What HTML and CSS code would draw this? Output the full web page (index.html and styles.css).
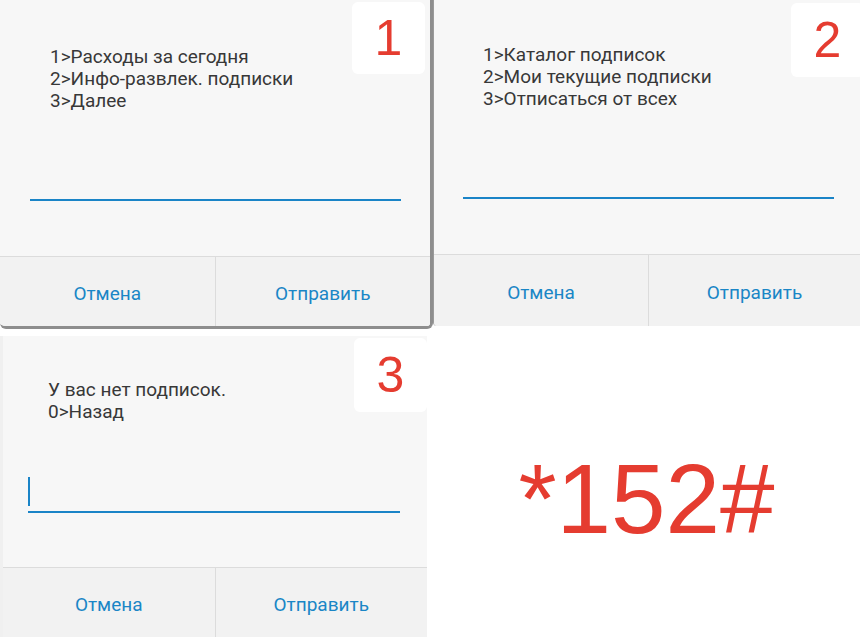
FILE: index.html
```html
<!DOCTYPE html>
<html lang="ru">

<head>
    <meta charset="UTF-8">
    <meta name="viewport" content="width=device-width, initial-scale=1.0">
    <title>USSD *152#</title>
    <link rel="stylesheet" href="styles.css">
</head>

<body>
    <div class="screen">
        <div class="row">
            <section class="dialog dialog-first">
                <div class="dialog-body">
                    <span class="badge">1</span>
                    <div class="message">
                        <p>1&gt;Расходы за сегодня</p>
                        <p>2&gt;Инфо-развлек. подписки</p>
                        <p>3&gt;Далее</p>
                    </div>
                    <div class="field"></div>
                </div>
                <div class="dialog-actions">
                    <button class="btn">Отмена</button>
                    <button class="btn">Отправить</button>
                </div>
            </section>

            <section class="dialog dialog-second">
                <div class="dialog-body">
                    <span class="badge">2</span>
                    <div class="message">
                        <p>1&gt;Каталог подписок</p>
                        <p>2&gt;Мои текущие подписки</p>
                        <p>3&gt;Отписаться от всех</p>
                    </div>
                    <div class="field"></div>
                </div>
                <div class="dialog-actions">
                    <button class="btn">Отмена</button>
                    <button class="btn">Отправить</button>
                </div>
            </section>
        </div>

        <div class="row row-bottom">
            <section class="dialog dialog-third">
                <div class="dialog-body">
                    <span class="badge">3</span>
                    <div class="message">
                        <p>У вас нет подписок.</p>
                        <p>0&gt;Назад</p>
                    </div>
                    <div class="field field-active"></div>
                </div>
                <div class="dialog-actions">
                    <button class="btn">Отмена</button>
                    <button class="btn">Отправить</button>
                </div>
            </section>

            <div class="code">*152#</div>
        </div>
    </div>
</body>

</html>
```

FILE: styles.css
```css
body {
    margin: 0;
    background-color: #fff;
    font-family: Roboto, "Noto Sans", sans-serif;
    overflow: hidden;
}

.screen {
    width: 860px;
    height: 637px;
}

.row {
    display: flex;
    align-items: flex-start;
}

.row-bottom {
    margin-top: 7px;
}

/* dialog frame */
.dialog {
    position: relative;
    box-sizing: border-box;
    display: flex;
    flex-direction: column;
    background-color: #f7f7f7;
    overflow: hidden;
}

.dialog-first {
    width: 433px;
    height: 329px;
    border-right: 3px solid #8e8e8e;
    border-bottom: 3px solid #8e8e8e;
    border-radius: 0 0 6px 6px;
}

.dialog-second {
    width: 427px;
    height: 326px;
    border-left: 1px solid #9a9a9a;
    border-radius: 0 0 0 4px;
}

.dialog-third {
    width: 427px;
    height: 301px;
    border-left: 3px solid #f0f0f0;
}

.dialog-body {
    position: relative;
    height: 256px;
    border-bottom: 1px solid #dcdcdc;
    box-sizing: border-box;
}

.dialog-first .dialog-body {
    height: 257px;
    padding: 46px 0 0 50px;
}

.dialog-second .dialog-body {
    height: 255px;
    padding: 44px 0 0 49px;
}

.dialog-third .dialog-body {
    height: 232px;
    padding: 43px 0 0 45px;
}

.badge {
    position: absolute;
    top: 2px;
    right: 5px;
    width: 73px;
    height: 72px;
    display: flex;
    justify-content: center;
    align-items: center;
    background-color: #fff;
    border-radius: 6px;
    color: #e53c30;
    font-family: "Liberation Sans", Arial, sans-serif;
    font-size: 50px;
}

.dialog-second .badge {
    top: 3px;
    right: -4px;
    height: 74px;
}

.dialog-third .badge {
    right: 0;
    height: 74px;
}

.message p {
    margin: 0;
    color: #383838;
    font-size: 19px;
    line-height: 22px;
}

/* text input underline */
.field {
    height: 29px;
    margin: 58px 29px 0 -20px;
    border-bottom: 2px solid #1a84c7;
}

.dialog-second .field {
    margin: 58px 26px 0 -20px;
}

.dialog-third .field {
    position: relative;
    height: 31px;
    margin: 57px 27px 0 -20px;
}

.field-active::before {
    content: "";
    position: absolute;
    left: 0;
    bottom: 5px;
    width: 2px;
    height: 29px;
    background-color: #1a84c7;
}

.dialog-actions {
    flex: 1;
    display: flex;
    background-color: #f2f2f2;
}

.btn {
    flex: 1;
    border: none;
    background-color: transparent;
    color: #1a86c6;
    font-family: Roboto, "Noto Sans", sans-serif;
    font-size: 19px;
    padding: 4px 0 0;
    cursor: pointer;
}

.btn + .btn {
    border-left: 1px solid #dcdcdc;
}

.dialog-second .btn:first-child {
    flex: 0 0 214px;
}

/* big USSD code */
.code {
    flex: 1;
    height: 301px;
    display: flex;
    justify-content: center;
    align-items: center;
    padding: 26px 0 0 6px;
    box-sizing: border-box;
    color: #e53c30;
    font-family: "Liberation Sans", Arial, sans-serif;
    font-size: 98px;
}
```
